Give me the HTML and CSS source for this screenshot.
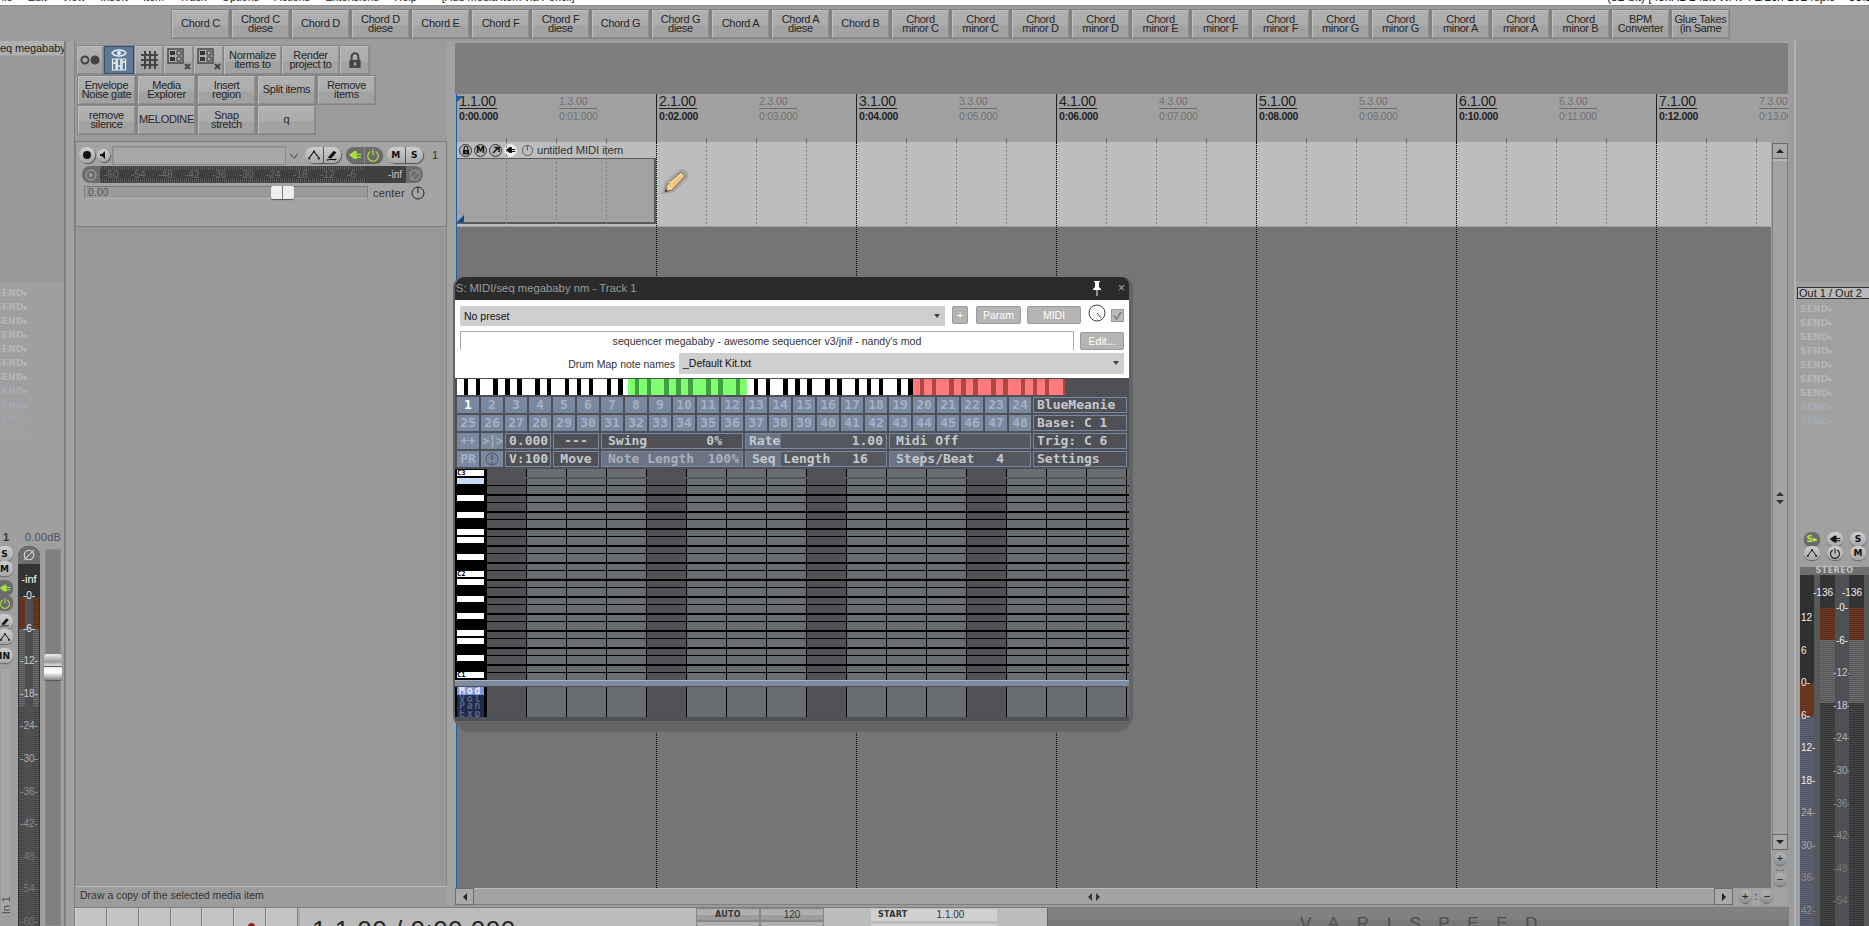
FILE: index.html
```html
<!DOCTYPE html>
<html lang="en">
<head>
<meta charset="utf-8">
<title>REAPER</title>
<link rel="stylesheet" href="styles.css">
</head>
<body>
<svg class="defs" width="0" height="0">
  <symbol id="i-env" viewBox="0 0 16 16"><path d="M2 12 8 4l6 8" fill="none" stroke="#111" stroke-width="1.3"/><circle cx="2.5" cy="12" r="1.2" fill="#111"/><circle cx="8" cy="4" r="1.2" fill="#111"/><circle cx="13.5" cy="12" r="1.2" fill="#111"/></symbol>
  <symbol id="i-fx" viewBox="0 0 16 16"><path d="M3 11 10 3l3 2-6 7z" fill="#111"/><path d="M2 14c3-2 6 0 11-1" fill="none" stroke="#111" stroke-width="1.2"/></symbol>
  <symbol id="i-plug" viewBox="0 0 16 16"><path d="M1 8 7 3.5h3v3h5v1.5h-5v1.5h5V11h-5v1.500H7z" fill="currentColor"/></symbol>
  <symbol id="i-power" viewBox="0 0 16 16"><path d="M5 4a6 6 0 1 0 6 0M8 1.500v7" fill="none" stroke="currentColor" stroke-width="1.4"/></symbol>
  <symbol id="i-phase" viewBox="0 0 16 16"><circle cx="8" cy="8" r="5.500" fill="none" stroke="currentColor" stroke-width="1.200"/><path d="M2 14 14 2" stroke="currentColor" stroke-width="1.200"/></symbol>
  <symbol id="i-lock" viewBox="0 0 16 16"><path d="M5 8V5a3 3 0 0 1 6 0v3" fill="none" stroke="currentColor" stroke-width="1.800"/><path d="M3 8h10v7H3z" fill="currentColor"/><path d="M7 10h2v3H7z" fill="#a5a5a5"/></symbol>
  <symbol id="i-grid-x" viewBox="0 0 24 24"><rect x="1" y="1" width="15" height="14" fill="none" stroke="#333" stroke-width="1.200"/><path d="M3 3h5v4H3zM3 9h5v4H3z" fill="#333"/><path d="M10 3h4v4h-4zM10 9h4v4h-4z" fill="none" stroke="#333"/><path d="m18 16 5 5m0-5-5 5" stroke="#444" stroke-width="2"/></symbol>
</svg>

<div class="menubar">
  <div class="menu-left">
    <span class="m-file">File</span><span>Edit</span><span>View</span><span>Insert</span><span>Item</span><span>Track</span><span>Options</span><span>Actions</span><span>Extensions</span><span>Help</span><span class="m-note">[Add media item via Pencil]</span>
  </div>
  <div class="menu-right">(32-bit) [48kHz 24bit WAV : 2/2ch 1024spls ~ 33.1/33ms]</div>
</div>

<div class="chordbar">
  <div class="chords">
    <button class="tb w57">Chord C</button><button class="tb w57">Chord C<br>diese</button><button class="tb w57">Chord D</button><button class="tb w57">Chord D<br>diese</button><button class="tb w57">Chord E</button><button class="tb w57">Chord F</button><button class="tb w57">Chord F<br>diese</button><button class="tb w57">Chord G</button><button class="tb w57">Chord G<br>diese</button><button class="tb w57">Chord A</button><button class="tb w57">Chord A<br>diese</button><button class="tb w57">Chord B</button>
    <button class="tb w57">Chord<br>minor C</button><button class="tb w57">Chord<br>minor C</button><button class="tb w57">Chord<br>minor D</button><button class="tb w57">Chord<br>minor D</button><button class="tb w57">Chord<br>minor E</button><button class="tb w57">Chord<br>minor F</button><button class="tb w57">Chord<br>minor F</button><button class="tb w57">Chord<br>minor G</button><button class="tb w57">Chord<br>minor G</button><button class="tb w57">Chord<br>minor A</button><button class="tb w57">Chord<br>minor A</button><button class="tb w57">Chord<br>minor B</button>
    <button class="tb w57">BPM<br>Converter</button><button class="tb w57">Glue Takes<br>(in Same</button>
  </div>
</div>

<div class="main">
  <aside class="mixl">
    <div class="mixl-name">eq megababy</div>
    <div class="mixl-top"></div>
    <div class="sends sends-left">
      <div class="send">SEND&#9656;</div><div class="send">SEND&#9656;</div><div class="send">SEND&#9656;</div><div class="send">SEND&#9656;</div><div class="send">SEND&#9656;</div><div class="send">SEND&#9656;</div><div class="send">SEND&#9656;</div><div class="send f1">SEND&#9656;</div><div class="send f2">SEND&#9656;</div><div class="send f3">SEND&#9656;</div><div class="send f4">SEND&#9656;</div>
    </div>
    <div class="mixl-head"><span class="mixl-num">1</span><span class="mixl-db">0.00dB</span></div>
    <div class="strip">
      <div class="strip-btns">
        <div class="sbtn"><span class="pix">S</span></div>
        <div class="sbtn"><span class="pix">M</span></div>
        <div class="sbtn dark gap"><svg class="ic12"><use href="#i-plug"/></svg></div>
        <div class="sbtn dark"><svg class="ic12"><use href="#i-power"/></svg></div>
        <div class="sbtn gap"><svg class="ic12"><use href="#i-fx"/></svg></div>
        <div class="sbtn"><svg class="ic12"><use href="#i-env"/></svg></div>
        <div class="sbtn gap"><span class="pix">IN</span></div>
        <div class="strip-in"><span class="in-label">In 1</span></div>
      </div>
      <div class="lmeter">
        <div class="lmeter-phase"><svg class="ic14"><use href="#i-phase"/></svg></div>
        <div class="lmeter-inf">-inf</div>
        <div class="lmeter-bars">
          <div class="mbar"></div><div class="mmid"></div><div class="mbar"></div>
          <div class="scale scale-left">
            <span class="c0">-0-</span><span class="c0">-6-</span><span class="c1">-12-</span><span class="c1">-18-</span><span class="c2">-24-</span><span class="c2">-30-</span><span class="c3">-36-</span><span class="c3">-42-</span><span class="c4">-48-</span><span class="c4">-54-</span><span class="c4">-60-</span>
          </div>
        </div>
      </div>
      <div class="lfader"><div class="fader-handle"></div></div>
    </div>
  </aside>
  <div class="gutter-l"></div>

  <div class="center">
    <div class="work">
      <section class="tcp">
        <div class="tools">
          <div class="tool-row">
            <button class="tb w26"><svg class="ic24" viewBox="0 0 24 24"><circle cx="7" cy="12" r="3.500" fill="none" stroke="#444" stroke-width="2"/><circle cx="17" cy="12" r="4.500" fill="#444"/></svg></button>
            <button class="tb w30 on"><svg class="ic24" viewBox="0 0 24 24"><path d="M5 5c3-4 11-4 14 0-3 4-11 4-14 0z" fill="none" stroke="#e8eef4" stroke-width="1.300"/><circle cx="12" cy="5" r="2" fill="#e8eef4"/><path d="M5.500 11h3.500v11H5.500zM10.300 11h3.500v11h-3.500zM15.100 11h3.500v11h-3.500z" fill="none" stroke="#e8eef4" stroke-width="1.200"/><path d="M5.500 15h3.500M10.300 18h3.500M15.100 14h3.500" stroke="#e8eef4" stroke-width="1.500"/></svg></button>
            <button class="tb w28"><svg class="ic24" viewBox="0 0 24 24"><path d="M8 3v18M13 3v18M18 3v18M4 7h17M4 12h17M4 17h17" stroke="#444" stroke-width="2"/></svg></button>
            <button class="tb w29"><svg class="ic24"><use href="#i-grid-x"/></svg></button>
            <button class="tb w29"><svg class="ic24"><use href="#i-grid-x"/></svg></button>
            <button class="tb w57">Normalize<br>items to</button>
            <button class="tb w57">Render<br>project to</button>
            <button class="tb w29"><svg class="ic18 lock"><use href="#i-lock"/></svg></button>
          </div>
          <div class="tool-row row-b">
            <button class="tb w57">Envelope<br>Noise gate</button><button class="tb w57">Media<br>Explorer</button><button class="tb w57">Insert<br>region</button><button class="tb w57">Split items</button><button class="tb w57">Remove<br>items</button>
          </div>
          <div class="tool-row row-b">
            <button class="tb w57">remove<br>silence</button><button class="tb w57">MELODINE</button><button class="tb w57">Snap<br>stretch</button><button class="tb w57">q</button>
          </div>
        </div>
        <div class="track">
          <div class="track-top">
            <span class="round arm"><i></i></span>
            <span class="round spk"><svg class="ic10" viewBox="0 0 10 10"><path d="M1 4h2l3-3v8L3 6H1z" fill="#111"/></svg></span>
            <div class="track-name"></div>
            <svg class="chev" viewBox="0 0 12 8"><path d="m2 2 4 4 4-4" fill="none" stroke="#666" stroke-width="1.300"/></svg>
            <span class="pill"><span class="pill-c"><svg class="ic14"><use href="#i-env"/></svg></span><span class="pill-c"><svg class="ic14"><use href="#i-fx"/></svg></span></span>
            <span class="pill pill-dark"><span class="pill-c"><svg class="ic14"><use href="#i-plug"/></svg></span><span class="pill-c"><svg class="ic14"><use href="#i-power"/></svg></span></span>
            <span class="pill"><span class="pill-c pix">M</span><span class="pill-c pix">S</span></span>
            <span class="track-no">1</span>
          </div>
          <div class="tmeter">
            <span class="tm-play"><svg class="ic12" viewBox="0 0 12 12"><circle cx="6" cy="6" r="5" fill="none" stroke="#aaa"/><path d="M4.500 3.500 8 6 4.500 8.500z" fill="#aaa"/></svg></span>
            <div class="tm-scale"><span>-60</span><span>-54</span><span>-48</span><span>-42</span><span>-36</span><span>-30</span><span>-24</span><span>-18</span><span>-12</span><span>-6</span></div>
            <span class="tm-inf">-inf</span>
            <span class="tm-phase"><svg class="ic14"><use href="#i-phase"/></svg></span>
          </div>
          <div class="tvol">
            <div class="vol-slider"><span>0.00</span><div class="vol-handle"></div></div>
            <span class="center-lab">center</span>
            <svg class="pan" viewBox="0 0 14 14"><circle cx="7" cy="7" r="6" fill="none" stroke="#222"/><path d="M7 7V1" stroke="#222"/></svg>
          </div>
        </div>
        <div class="tcp-empty"></div>
        <div class="hint">Draw a copy of the selected media item</div>
      </section>
      <div class="gutter-m"></div>

      <section class="arrange">
        <div class="band"></div>
        <div class="ruler">
          <i class="flag"></i>
          <div class="mk major first"><b class="bar">1.1.00</b><b class="time">0:00.000</b></div>
          <div class="mk"><b class="bar">1.3.00</b><b class="time">0:01.000</b></div>
          <div class="mk major"><b class="bar">2.1.00</b><b class="time">0:02.000</b></div>
          <div class="mk"><b class="bar">2.3.00</b><b class="time">0:03.000</b></div>
          <div class="mk major"><b class="bar">3.1.00</b><b class="time">0:04.000</b></div>
          <div class="mk"><b class="bar">3.3.00</b><b class="time">0:05.000</b></div>
          <div class="mk major"><b class="bar">4.1.00</b><b class="time">0:06.000</b></div>
          <div class="mk"><b class="bar">4.3.00</b><b class="time">0:07.000</b></div>
          <div class="mk major"><b class="bar">5.1.00</b><b class="time">0:08.000</b></div>
          <div class="mk"><b class="bar">5.3.00</b><b class="time">0:09.000</b></div>
          <div class="mk major"><b class="bar">6.1.00</b><b class="time">0:10.000</b></div>
          <div class="mk"><b class="bar">6.3.00</b><b class="time">0:11.000</b></div>
          <div class="mk major"><b class="bar">7.1.00</b><b class="time">0:12.000</b></div>
          <div class="mk"><b class="bar">7.3.00</b><b class="time">0:13.000</b></div>
        </div>
        <div class="area">
          <div class="tracks">
            <div class="lane">
              <div class="item-head">
                <span class="ih"><svg class="ic10" viewBox="0 0 16 16"><use href="#i-lock"/></svg></span>
                <span class="ih pix">M</span>
                <span class="ih"><svg class="ic10" viewBox="0 0 10 10"><path d="M2 8 7 3M3.500 2.500H8V7" fill="none" stroke="#111" stroke-width="1.500"/></svg></span>
                <span class="ih ih-on"><svg class="ic12"><use href="#i-plug"/></svg></span>
                <svg class="ih-pow" viewBox="0 0 14 14"><circle cx="7" cy="7" r="5.500" fill="none" stroke="#555"/><path d="M7 7V2" stroke="#555"/></svg>
                <span class="item-name">untitled MIDI item</span>
              </div>
              <div class="item"><i class="corner"></i></div>
              <svg class="pencil" viewBox="0 0 26 28"><path d="M0 26 3 14 18 1h5l3 4v5L12 24z" fill="#6d6d6d" opacity=".3"/><path d="M3 24l2-7L19 4l4 4L10 22z" fill="#f4c681" stroke="#7a6a50"/><path d="M5.500 17.500l4 4" stroke="#fbf3e2"/><path d="M7 15 20 6" stroke="#fbe2b4"/><path d="M3 24l1-3 2 2z" fill="#333"/></svg>
            </div>
            <div class="lane-grid"></div>
            <div class="bar-grid"><i></i><i></i><i></i><i></i><i></i><i></i><i></i></div>
          </div>
          <div class="vscroll">
            <div class="vs-btn"><svg class="tri" viewBox="0 0 8 4"><path d="M0 4 4 0l4 4z" fill="#222"/></svg></div>
            <div class="vs-track"><svg class="vs-mid" viewBox="0 0 8 14"><path d="M0 5 4 1l4 4zM0 9l4 4 4-4z" fill="#333"/></svg></div>
            <div class="vs-btn"><svg class="tri" viewBox="0 0 8 4"><path d="M0 0l4 4 4-4z" fill="#222"/></svg></div>
            <div class="vs-zoom"><span class="zb">+</span><span class="zdots">...</span><span class="zb">&minus;</span></div>
          </div>
        </div>
        <div class="hscroll">
          <div class="hs-btn"><svg class="tri-v" viewBox="0 0 4 8"><path d="M4 0 0 4l4 4z" fill="#222"/></svg></div>
          <div class="hs-track"><svg class="hs-mid" viewBox="0 0 14 8"><path d="M5 0 1 4l4 4zM9 0l4 4-4 4z" fill="#333"/></svg></div>
          <div class="hs-btn"><svg class="tri-v" viewBox="0 0 4 8"><path d="M0 0l4 4-4 4z" fill="#222"/></svg></div>
          <div class="hs-zoom"><span class="zb">+</span><span class="zcolon">:</span><span class="zb">&minus;</span></div>
        </div>
      </section>
    </div>

    <footer class="transport">
      <div class="tp-main">
        <div class="tp-btns"><span></span><span></span><span></span><span></span><span></span><span class="tp-rec"><i></i></span><span></span></div>
        <div class="tp-time">1.1.00 / 0:00.000</div>
        <div class="tp-tempo"><span class="pix-s">AUTO</span><span class="tempo">120</span><span></span><span></span></div>
        <div class="tp-selgroup">
          <div class="tp-sel"><span class="pix-s">START</span><span class="tempo">1.1.00</span></div>
          <div class="tp-sel"></div>
        </div>
      </div>
      <div class="tp-vari"><span class="vari-top"></span><span class="vari">VARISPEED</span></div>
    </footer>
  </div>

  <aside class="mixr">
    <div class="mixr-top"></div>
    <div class="mixr-out">Out 1 / Out 2</div>
    <div class="sends sends-right">
      <div class="send">SEND&#9656;</div><div class="send">SEND&#9656;</div><div class="send">SEND&#9656;</div><div class="send">SEND&#9656;</div><div class="send">SEND&#9656;</div><div class="send">SEND&#9656;</div><div class="send">SEND&#9656;</div><div class="send f1">SEND&#9656;</div><div class="send f2">SEND&#9656;</div><div class="send f4">SEND&#9656;</div>
    </div>
    <div class="mas-btns">
      <div class="mb-col"><div class="sbtn dark mb"><span class="pix lime">S&#9656;</span></div><div class="sbtn mb"><svg class="ic12"><use href="#i-env"/></svg></div></div>
      <div class="mb-col"><div class="sbtn mb"><svg class="ic12 blk"><use href="#i-plug"/></svg></div><div class="sbtn mb"><svg class="ic12 blk"><use href="#i-power"/></svg></div></div>
      <div class="mb-col"><div class="sbtn mb"><span class="pix">S</span></div><div class="sbtn mb"><span class="pix">M</span></div></div>
    </div>
    <div class="stereo">STEREO</div>
    <div class="rmeter">
      <div class="rm-left">
        <div class="rm-scale"><span>12</span><span>6</span><span>0-</span><span>6-</span><span>12-</span><span>18-</span><span class="c2">24-</span><span class="c2">30-</span><span class="c3">36-</span><span class="c3">42-</span></div>
      </div>
      <div class="rm-sep"></div>
      <div class="rm-bar"><span class="rm-peak">-136</span><div class="rm-fill"></div></div>
      <div class="rm-mid"><div class="scale scale-right"><span class="c0">-0-</span><span class="c0">-6-</span><span class="c1">-12-</span><span class="c1">-18-</span><span class="c2">-24-</span><span class="c2">-30-</span><span class="c3">-36-</span><span class="c3">-42-</span><span class="c4">-48-</span><span class="c4">-54-</span></div></div>
      <div class="rm-bar"><span class="rm-peak">-136</span><div class="rm-fill"></div></div>
      <div class="rm-sep"></div>
    </div>
  </aside>
</div>

<div class="jswin">
  <div class="js-title"><span class="js-name">JS: MIDI/seq megababy nm - Track 1</span>
    <svg class="js-pin" viewBox="0 0 12 16"><path d="M3 1h6v1H8v5l2 2v1H6.500v6h-1v-6H2V9l2-2V2H3z" fill="#fff"/></svg>
    <span class="js-x">&times;</span>
  </div>
  <div class="js-head">
    <div class="js-l1">
      <div class="combo combo-p">No preset<i class="dn"></i></div>
      <button class="wb wb-plus">+</button><button class="wb wb-param">Param</button><button class="wb wb-midi">MIDI</button>
      <svg class="js-knob" viewBox="0 0 18 18"><circle cx="9" cy="9" r="8" fill="#fff" stroke="#444"/><path d="M9 9l4 5" stroke="#444"/></svg>
      <span class="js-check"><svg viewBox="0 0 12 12"><path d="m2 6 3 4 5-8" fill="none" stroke="#777" stroke-width="1.400"/></svg></span>
    </div>
    <div class="js-l2"><div class="js-desc">sequencer megababy - awesome sequencer v3/jnif - nandy's mod</div><button class="wb wb-edit">Edit...</button></div>
    <div class="js-l3"><label class="js-lab">Drum Map note names</label><div class="combo combo-d">_Default Kit.txt<i class="dn"></i></div></div>
  </div>
  <div class="gui">
    <div class="piano"><i class="kk k1"></i><i class="kk k2"></i><i class="kk k3"></i><i class="kk k4"></i></div>
    <div class="gbtns">
      <span class="n sel">1</span><span class="n">2</span><span class="n">3</span><span class="n">4</span><span class="n">5</span><span class="n">6</span><span class="n">7</span><span class="n">8</span><span class="n">9</span><span class="n">10</span><span class="n">11</span><span class="n">12</span><span class="n">13</span><span class="n">14</span><span class="n">15</span><span class="n">16</span><span class="n">17</span><span class="n">18</span><span class="n">19</span><span class="n">20</span><span class="n">21</span><span class="n">22</span><span class="n">23</span><span class="n">24</span><span class="d">BlueMeanie</span>
      <span class="n">25</span><span class="n">26</span><span class="n">27</span><span class="n">28</span><span class="n">29</span><span class="n">30</span><span class="n">31</span><span class="n">32</span><span class="n">33</span><span class="n">34</span><span class="n">35</span><span class="n">36</span><span class="n">37</span><span class="n">38</span><span class="n">39</span><span class="n">40</span><span class="n">41</span><span class="n">42</span><span class="n">43</span><span class="n">44</span><span class="n">45</span><span class="n">46</span><span class="n">47</span><span class="n">48</span><span class="d">Base: C 1</span>
      <span class="n">++</span><span class="n tight">&gt;|&gt;</span><span class="d s2">0.000</span><span class="d s2 ctr">---</span><span class="d s6 sb swing"><em>Swing</em><em>0%</em></span><span class="d s6 sb r1"><em>Rate</em><em>1.00</em></span><span class="d s6 off">Midi Off</span><span class="d">Trig: C 6</span>
      <span class="n">PR</span><span class="n"><svg class="ic14" viewBox="0 0 14 14"><circle cx="7" cy="7" r="6" fill="none" stroke="#4c5260"/><path d="M7 3v5M7 10v1.500" stroke="#4c5260" stroke-width="1.500"/></svg></span><span class="d s2">V:100</span><span class="d s2 ctr">Move</span><span class="d s6 sb nl"><em>Note Length</em><em>100%</em></span><span class="d s6 r1 seqlen"><em>Seq Length</em><em>16</em></span><span class="d s6 r2 seqlen"><em>Steps/Beat</em><em>4</em></span><span class="d">Settings</span>
    </div>
    <div class="seq">
      <div class="seq-keys">
        <b class="lk first">C3</b><i class="wk near blue"></i><i class="wk far"></i><i class="wk far"></i><i class="wk far"></i><i class="wk near"></i><i class="wk far"></i><b class="lk far">C2</b><i class="wk near"></i><i class="wk far"></i><i class="wk far"></i><i class="wk far"></i><i class="wk near"></i><i class="wk far"></i><b class="lk far">C1</b>
      </div>
      <div class="seq-grid"></div>
    </div>
    <div class="seq-split"></div>
    <div class="ccs">
      <div class="cc-labels"><span class="cc on">Mod</span><span class="cc">Vol</span><span class="cc">Pan</span><span class="cc">Exp</span></div>
      <div class="cc-grid"></div>
    </div>
  </div>
</div>
</body>
</html>
```
FILE: styles.css
```css
*{box-sizing:border-box}
html,body{margin:0;height:926px;overflow:hidden}
body{width:1869px;background:#9c9c9c;font-family:"Liberation Sans",Arial,sans-serif;font-size:11px;color:#222;position:relative;display:flex;flex-direction:column}
.defs{position:absolute}
svg{display:block}
.ic10{width:10px;height:10px}.ic12{width:12px;height:12px}.ic14{width:14px;height:14px}.ic18{width:18px;height:18px}.ic24{width:24px;height:24px}

/* menu */
.menubar{height:6px;flex:none;background:#fff;border-bottom:1px solid #888;overflow:hidden;display:flex;justify-content:space-between;font-size:11px;line-height:14px;color:#222}
.menu-left{display:flex;gap:15px;margin-top:-10px;margin-left:-5px}
.menu-left .m-note{margin-left:10px}
.menu-right{margin-top:-10px;white-space:nowrap;width:262px;font-size:12px}

/* toolbar button */
.tb{display:flex;align-items:center;justify-content:center;text-align:center;height:28px;padding:0;border:0;font:11px/9.5px "Liberation Sans",Arial,sans-serif;letter-spacing:-.3px;color:#262626;background:linear-gradient(#b1b1b1 0,#acacac 55%,#a2a2a2 56%,#a2a2a2 100%);box-shadow:inset 1px 1px 0 #bdbdbd,inset -1px -1px 0 #8f8f8f;white-space:nowrap;overflow:hidden}
.w26{width:26px}.w28{width:28px}.w29{width:29px}.w30{width:30px}.w57{width:57px}
.tb.on{background:#5d7a94;box-shadow:inset 0 0 0 1px #3a5268}
.chordbar{height:35px;flex:none;padding:3px 0 0 171px}
.chords{display:inline-flex;gap:3px;padding:1px;background:#828282}
.chords .tb{height:28px}

/* main */
.main{flex:1;display:flex;min-height:0}
.mixl{width:66px;flex:none;border-right:2px solid #7f7f7f;display:flex;flex-direction:column;background:#9a9a9a;overflow:hidden}
.mixl-name{height:15px;background:#b0b0b0;white-space:nowrap;text-align:right;line-height:14px;font-size:11px;padding-right:1px;letter-spacing:-.1px;overflow:hidden;border-bottom:1px solid #a3a3a3}
.mixl-top{height:226px;flex:none;background:#999}
.sends{display:flex;flex-direction:column;background:#9f9f9f}
.sends-left{height:248px;flex:none;padding-top:4px}
.send{height:14px;font:bold 9px/14px "DejaVu Sans",sans-serif;letter-spacing:.2px;color:#b6b6b6;white-space:nowrap}
.sends-left .send{margin-left:-5px}
.f1{color:#a9adb6}.f2{color:#a5a9b3}.f3{color:#a3a5ac}.f4{color:#a1a2a5}
.mixl-head{height:18px;flex:none;background:#9f9f9f;display:flex;align-items:center;font-size:11px;color:#333;padding-left:3px;margin-top:-2px;position:relative}
.mixl-num{width:22px;font-weight:bold}
.mixl-db{color:#4a4f5a;letter-spacing:.2px}
.strip{flex:1;display:flex;background:#9f9f9f;min-height:0}
.strip-btns{width:13px;margin-right:5px;flex:none;display:flex;flex-direction:column}
.sbtn{height:15px;width:17px;margin-left:-4px;flex:none;display:flex;align-items:center;justify-content:center;background:linear-gradient(#cfcfcf,#a8a8a8);border-radius:7px;box-shadow:0 1px 1px #666;color:#111}
.sbtn.dark{background:#6b6b6b;color:#a8e03c}
.sbtn.gap{margin-top:4px}
.pix{font:bold 9px/8px "DejaVu Sans",sans-serif;color:#111}
.strip-in{flex:1;margin-top:5px;margin-bottom:9px;background:#a6a6a6;border:1px solid #999;position:relative;width:12px;overflow:hidden}
.in-label{position:absolute;bottom:2px;left:-1px;writing-mode:vertical-rl;transform:rotate(180deg);font-size:11px;color:#444}
.lmeter{width:22px;flex:none;display:flex;flex-direction:column;background:#333;border-radius:10px 10px 0 0;overflow:hidden}
.lmeter-phase{height:18px;background:#6d6d6d;color:#ddd;display:flex;align-items:center;justify-content:center;flex:none}
.lmeter-inf{height:33px;flex:none;text-align:center;color:#fff;font-size:11px;line-height:30px}
.lmeter-bars{flex:1;display:flex;position:relative;padding:0 1px}
.mbar{width:6px;height:100%;background:repeating-linear-gradient(#0000 0 1px,#0003 1px 2px),linear-gradient(#6f3a22 0 32px,#6a6a6a 32px 110px,#555 110px)}
.mmid{flex:1;background:#4d4f54}
.scale{position:absolute;display:flex;flex-direction:column;align-items:center;font-size:10px;line-height:32.6px}
.scale span{height:32.6px;white-space:nowrap}
.scale-left{left:0;right:0;top:-17px}
.c0{color:#f0f0f0}.c1{color:#c8ccd4}.c2{color:#aaacb0}.c3{color:#8e8e8e}.c4{color:#777}
.lfader{width:16px;margin-left:5px;flex:none;margin-top:3px;background:#808080;border:1px solid #8e8e8e;position:relative}
.fader-handle{position:absolute;left:-2px;width:18px;height:26px;top:104px;border-radius:3px;background:linear-gradient(#eee,#999 30%,#ddd 44%,#555 48%,#eee 52%,#fff 70%,#888);box-shadow:0 1px 1px #555}
.gutter-l{width:9px;flex:none;background:#a2a2a2;border-right:1px solid #7f7f7f}

.center{width:1719px;flex:none;display:flex;flex-direction:column;min-height:0}
.work{height:864px;flex:none;display:flex}
.tcp{width:372px;flex:none;display:flex;flex-direction:column}
.tools{height:100px;flex:none;padding:4px 0 0 1px}
.tool-row{display:inline-flex;background:#858585;padding:1px;gap:1px;float:left;clear:left;margin-bottom:-1px}
.tool-row .tb{height:28px}
.tool-row.row-b{gap:3px;margin-left:1px;margin-top:1px}
.lock{color:#444}
.tb .lock{margin:0}
.track{height:86px;flex:none;background:#a4a4a4;border:1px solid #7c7c7c;border-bottom-width:1px;padding:3px 5px 0 3px}
.track-top{display:flex;align-items:center;height:20px}
.round{width:15px;height:15px;border-radius:50%;background:linear-gradient(#d0d0d0,#a5a5a5);box-shadow:1px 1px 1px #555;display:flex;align-items:center;justify-content:center;flex:none}
.arm{margin-right:2px;width:16px;height:16px}
.arm i{width:8px;height:8px;border-radius:50%;background:#111}
.spk{width:13px;height:13px}
.track-name{width:174px;height:19px;margin:0 0 0 2px;background:#a8a8a8;border:1px solid #8b8b8b;box-shadow:inset 1px 1px 0 #999;flex:none}
.chev{width:12px;height:8px;margin:2px 5px 0 2px;flex:none}
.pill{display:flex;height:16px;width:36px;border-radius:8px;background:linear-gradient(#cecece,#a8a8a8);box-shadow:1px 1px 1px #555;color:#111;margin-right:5px;flex:none}
.pill-c{flex:1;display:flex;align-items:center;justify-content:center}
.pill-c+.pill-c{border-left:1px solid #555}
.pill-dark{background:#6b6b6b;color:#a8e03c}
.pill-dark .pill-c+.pill-c{border-left-color:#888}
.track-no{margin-left:4px;font-size:11px;color:#333}
.tmeter{height:17px;margin:1px 18px 0 3px;display:flex;align-items:center;border-radius:8px;background:#6c6c6c;color:#aaa;overflow:hidden}
.tm-play{width:18px;display:flex;justify-content:center;flex:none}
.tm-scale{flex:1;height:100%;display:flex;padding-left:4px;background:repeating-linear-gradient(90deg,#5c5c5c 0 1px,#383838 1px 2px) top/100% 4px no-repeat,repeating-linear-gradient(90deg,#5c5c5c 0 1px,#383838 1px 2px) bottom/100% 4px no-repeat,#404040;font-size:10px;line-height:17px;color:#6c6c6c}
.tm-scale span{width:27px;flex:none}
.tm-inf{width:40px;flex:none;background:#404040;height:100%;line-height:17px;font-size:10px;color:#ccc;text-align:right;padding-right:4px;margin-left:-10px}
.tm-phase{width:17px;flex:none;display:flex;justify-content:center;color:#999}
.tvol{display:flex;align-items:center;margin:3px 0 0 5px;height:13px}
.vol-slider{width:284px;height:13px;flex:none;background:#9a9a9a;border:1px solid #808080;border-top-color:#7a7a7a;border-bottom-color:#b5b5b5;position:relative;font-size:10px;line-height:11px;padding-left:3px;color:#555;letter-spacing:.3px}
.vol-handle{position:absolute;left:186px;top:-1px;width:23px;height:13px;border-radius:2px;background:linear-gradient(90deg,#eee 0 48%,#777 48% 54%,#eee 54%);box-shadow:0 1px 1px #555}
.center-lab{margin-left:5px;font-size:11px;color:#333;letter-spacing:.2px;width:35px}
.pan{width:14px;height:14px;margin-left:3px}
.tcp-empty{flex:1;background:#989898;border:1px solid #8a8a8a;border-top:0;border-bottom:1px solid #bbb}
.hint{height:18px;flex:none;padding-left:5px;line-height:17px;font-size:10.5px;color:#333}
.gutter-m{width:8px;flex:none;background:#a2a2a2}

.arrange{width:1333px;flex:none;display:flex;flex-direction:column;min-height:0;background:#a2a2a2;margin-left:0}
.band{height:51px;flex:none;margin-top:2px;background:#7e7e7e}
.ruler{height:48px;flex:none;display:flex;overflow:hidden;padding-left:1px;position:relative;background:repeating-linear-gradient(90deg,#6a6a6a 0 1px,#0000 1px 50px) 1px 100%/100% 4px no-repeat,#a0a0a0}
.flag{position:absolute;left:1px;top:2px;border-style:solid;border-width:7px 7px 0 0;border-color:#1d5ea4 transparent transparent transparent}
.mk{width:100px;flex:none;padding:1px 0 0 3px;display:flex;flex-direction:column;color:#717171}
.mk.major{color:#222;border-left:1px solid #222;padding-left:2px}
.mk.first{border-left-color:#1d5ea4}
.mk b{display:block;white-space:nowrap}
.bar{font-size:13px;line-height:13px;font-weight:normal;width:38px;border-bottom:1px solid currentColor}
.mk:not(.major) .bar{font-size:10.5px;letter-spacing:-.1px}
.mk.major .bar{font-size:14px;letter-spacing:-.4px}
.time{font-size:10.5px;line-height:14px;margin-top:0;letter-spacing:-.3px}
.mk:not(.major) .time{font-weight:normal}
.mk.major .time{font-weight:bold}
.area{flex:1;display:flex;min-height:0}
.tracks{width:1315px;flex:none;position:relative;overflow:hidden;background:#757575;border-left:1px solid #1d5ea4;margin-right:1px;margin-left:1px}
.lane{height:85px;background:#bdbdbd;position:relative;border-bottom:1px solid #a0a0a0}
.item-head{height:16px;display:flex;align-items:center;padding-left:2px;gap:0}
.ih{width:13px;height:13px;margin-right:2px;border-radius:50%;border:1px solid #333;display:flex;align-items:center;justify-content:center;background:#b5b5b5;color:#111;flex:none}
.ih-on{background:#eee;border-color:#eee}
.ih-pow{width:13px;height:13px;flex:none;margin-left:2px}
.item-name{margin-left:3px;font-size:11.3px;color:#333;letter-spacing:-.1px}
.item{width:199px;height:66px;background:#a2a2a2;border:1px solid #595959;border-width:1px 2px 2px 0;position:relative}
.corner{position:absolute;left:0;bottom:0;border-style:solid;border-width:0 0 7px 7px;border-color:transparent transparent #0f4a8c transparent}
.pencil{position:absolute;left:205px;top:26px;width:26px;height:28px}
.lane-grid{position:absolute;left:49px;top:0;height:85px;right:0;background:repeating-linear-gradient(90deg,#808080 0 1px,#0000 1px 50px);-webkit-mask-image:repeating-linear-gradient(#000 0 2px,#0000 2px 4px);mask-image:repeating-linear-gradient(#000 0 2px,#0000 2px 4px)}
.bar-grid{position:absolute;left:-1px;right:0;top:0;bottom:0;display:flex}
.bar-grid i{width:200px;flex:none;border-left:1px dotted #000}
.bar-grid i:first-child{border-left:0}
.vscroll{width:16px;flex:none;display:flex;flex-direction:column;background:#a3a3a3;border:1px solid #7d7d7d;border-width:0 1px;margin-top:1px}
.vs-btn{height:16px;flex:none;background:#a9a9a9;border:1px solid #6a6a6a;display:flex;align-items:center;justify-content:center;margin:0 -1px}
.tri{width:8px;height:4px}
.vs-track{flex:1;display:flex;align-items:center;justify-content:center;border-top:2px solid #b8b8b8}
.vs-mid{width:8px;height:14px}
.vs-zoom{height:38px;flex:none;display:flex;flex-direction:column;align-items:center;background:#9e9e9e;margin:0 -1px}
.zb{width:13px;height:13px;flex:none;border-radius:50%;background:linear-gradient(#b5b5b5,#8e8e8e);font-size:11px;line-height:12px;text-align:center;color:#222;box-shadow:0 1px 1px #666;margin-top:2px}
.zdots{line-height:6px;font-size:10px;height:6px;color:#444}
.hscroll{height:17px;flex:none;display:flex;background:#a2a2a2}
.hs-btn{width:19px;flex:none;background:#a9a9a9;border:1px solid #6d6d6d;display:flex;align-items:center;justify-content:center}
.tri-v{width:4px;height:8px}
.hs-track{width:1240px;flex:none;display:flex;align-items:center;justify-content:center;border-top:1px solid #b8b8b8;border-bottom:1px solid #7e7e7e}
.hs-mid{width:14px;height:8px}
.hs-zoom{width:40px;display:flex;align-items:center;justify-content:center;gap:3px;margin-left:3px}
.hs-zoom .zb{margin-top:0}
.zcolon{font-size:10px}

/* transport */
.transport{height:19px;flex:none;margin-top:2px;display:flex;overflow:hidden;width:1714px;border-top:1px solid #7d7d7d}
.tp-main{width:972px;flex:none;background:#bcbcbc;display:flex;position:relative}
.tp-btns{display:flex;width:223px;flex:none}
.tp-btns span{width:32px;border-right:1px solid #7f7f7f;border-left:1px solid #d0d0d0;position:relative;background:#c4c4c4}
.tp-rec i{position:absolute;left:13px;top:15px;width:7px;height:7px;border-radius:50%;background:#a11c1c}
.tp-time{width:398px;flex:none;padding:8px 0 0 12px;font-size:26px;line-height:28px;letter-spacing:.5px;color:#222;white-space:nowrap;overflow:hidden;border-left:2px solid #aaa}
.tp-tempo{display:flex;flex-wrap:wrap;height:100%;flex:none;width:128px;align-content:flex-start}
.tp-tempo>span{width:64px;height:13px;background:linear-gradient(#b0b0b0 50%,#9c9c9c 50%);border:1px solid #888;text-align:center;line-height:11px}
.pix-s{font:bold 8px/11px "DejaVu Sans",sans-serif;color:#333;letter-spacing:.3px}
.tempo{font-size:10px;color:#333;line-height:11px}
.tp-selgroup{margin-left:47px;margin-top:1px;width:126px;flex:none;display:flex;flex-direction:column;gap:3px}
.tp-sel{height:12px;background:#d0d0d0;display:flex;gap:29px;padding-left:7px;flex:none;line-height:11px}
.tp-vari{flex:1;background:#787878;position:relative;overflow:hidden;border-left:1px solid #666}
.vari-top{display:block;height:12px;background:#818181}
.vari{position:absolute;left:252px;top:6px;font-size:17px;line-height:20px;letter-spacing:17.700px;color:#4d4d4d;white-space:nowrap}

/* right mixer */
.mixr{flex:1;min-width:0;display:flex;flex-direction:column;border-left:2px solid #b2b2b2;overflow:hidden;background:#a0a0a0}
.mixr-top{height:241px;flex:none;background:#999}
.mixr-out{height:12px;flex:none;margin:5px 0 0 1px;width:80px;background:#bababa;border:1px solid #333;line-height:10px;font-size:11px;padding-left:1px;white-space:nowrap;color:#222}
.sends-right{height:233px;flex:none;padding:3px 0 0 4px;background:#a0a0a0}
.mas-btns{height:35px;flex:none;display:flex;gap:8px;padding-left:9px}
.mb-col{display:flex;flex-direction:column;width:15px}
.sbtn.mb{margin-left:-1px;height:14px;width:16px}
.lime{color:#b6ec3a}
.blk{color:#111}
.stereo{height:8px;margin-left:4px;flex:none;background:#6f6f6f;color:#c3c3c3;font:bold 8px/8px "DejaVu Sans",sans-serif;letter-spacing:.5px;text-align:center}
.rmeter{flex:1;display:flex;margin-left:4px;background:#333;min-height:0}
.rm-left{width:14px;flex:none;position:relative;background:linear-gradient(#333 0 108px,#6f3a22 108px 142px,#5e6272 142px);overflow:visible}
.rm-left::after{content:"";position:absolute;inset:0;background:repeating-linear-gradient(#0000 0 1px,#0002 1px 2px)}
.rm-scale{position:absolute;z-index:1;left:1px;top:27px;display:flex;flex-direction:column;font-size:10px;color:#eee}
.rm-scale span{height:32.5px;line-height:32px;white-space:nowrap}
.rm-sep{width:6px;flex:none;background:#56585c}
.rm-bar{width:15px;flex:none;position:relative;background:#333}
.rm-peak{position:absolute;left:-7px;top:12px;color:#eee;font-size:10px;z-index:2;line-height:12px;white-space:nowrap}
.rm-fill{position:absolute;left:0;right:0;top:33px;bottom:0;background:repeating-linear-gradient(#0000 0 1px,#0003 1px 2px),linear-gradient(#6f3a22 0 32px,#6c6c6c 32px 95px,#444 95px)}
.rm-mid{width:14px;flex:none;position:relative;background:#4e5055}
.scale-right{left:-4px;right:-4px;top:17px}

/* JS window */
.jswin{position:absolute;left:453px;top:277px;width:680px;height:455px;padding:0 4px 11px 2px;background:#646464;border-radius:10px 10px 18px 18px}
.js-title{height:23px;background:#2b2b2b;border-radius:10px 8px 0 0;position:relative;color:#9c9c9c;font-size:11.3px;line-height:23px;display:flex;align-items:center;overflow:hidden}
.js-name{margin-left:-5px;white-space:nowrap}
.js-pin{position:absolute;left:636px;top:3px;width:12px;height:16px}
.js-x{position:absolute;left:663px;top:0;color:#aaa;font-size:12px}
.js-head{height:78px;background:#fff;padding:6px 5px 0 5px;color:#333}
.js-l1{display:flex;align-items:flex-start;height:25px}
.combo{height:20px;background:#cfcfcf;font-size:10.5px;line-height:20px;padding-left:4px;color:#111;position:relative;white-space:nowrap}
.combo-p{width:493px}
.dn{position:absolute;right:5px;top:8px;border-style:solid;border-width:4px 3px 0;border-color:#444 transparent transparent}
.wb{height:18px;padding:0;border:1px solid #9a9a9a;border-radius:2px;background:#b4b4b4;color:#fff;font:10.5px "Liberation Sans",sans-serif;flex:none}
.wb-plus{width:16px;margin-left:7px}.wb-param{width:45px;margin-left:8px}.wb-midi{width:54px;margin-left:6px}
.js-knob{width:18px;height:18px;margin:-2px 0 0 7px;flex:none}
.js-check{width:13px;height:13px;margin:3px 0 0 5px;background:#bbb;border:1px solid #999;flex:none;display:block}
.js-l2{display:flex;height:22px;margin-top:0}
.js-desc{width:614px;height:19px;border:1px solid #aaa;border-width:1px 1px 0 1px;text-align:center;line-height:19px;font-size:10.6px;color:#333;white-space:nowrap;padding-right:0}
.wb-edit{width:44px;height:18px;margin:1px 0 0 6px}
.js-l3{display:flex;align-items:center;justify-content:flex-end;margin-top:0;height:21px;padding-right:0}
.js-lab{font-size:10.5px;color:#333;margin-right:4px}
.combo-d{width:445px;height:21px}
.gui{height:343px;background:#4e5056;padding-top:1px}
.piano{height:16px;margin-left:2px;display:flex}
.kk{display:block;height:16px;flex:none;background:repeating-linear-gradient(90deg,var(--w) 0 6.7px,var(--k) 6.7px 11.2px,var(--w) 11.2px 18.6px,var(--k) 18.6px 23.1px,var(--w) 23.1px 36.4px,var(--k) 36.4px 40.9px,var(--w) 40.9px 48.3px,var(--k) 48.3px 52.8px,var(--w) 52.8px 60.2px,var(--k) 60.2px 64.7px,var(--w) 64.7px 71.4px)}
.k1{width:171px;--w:#fff;--k:#000}
.k2{width:119px;--w:#80ff70;--k:#40a040}
.k3{width:166px;--w:#fff;--k:#000}
.k4{width:152px;--w:#ff7a7a;--k:#b04646}
.gbtns{display:grid;grid-template-columns:repeat(24,22px) 94px;grid-auto-rows:16px;gap:2px;margin:2px 0 0 2px;font:bold 13px/16px "DejaVu Sans Mono","Liberation Mono",monospace}
.gbtns span{display:flex;align-items:center;white-space:nowrap;overflow:hidden}
.n{justify-content:center;background:#7a88a0;color:#a6b0c0}
.n.tight{letter-spacing:-1px}
.n.sel{color:#fff}
.d{background:#4e5056;border:1px solid #7a88a0;color:#c6c8cc;padding:0 3px}
.s2{grid-column:span 2}.s6{grid-column:span 6}
.ctr{justify-content:center}
.sb{justify-content:space-between}
.swing{padding:0 20px 0 6px}
.off{background:#55575e;padding-left:6px}
.d em{font-style:normal}
.seqlen{justify-content:flex-start;padding-left:6px}
.seqlen em+em{margin-left:22px}
.r1{background:linear-gradient(90deg,#6a7484 35px,#55575e 35px)}
.r2{background:linear-gradient(90deg,#6a7484 34px,#55575e 34px)}
.nl{background:#6a7484;color:#aab0bb;padding-left:6px}
.seq{display:flex;height:211px;margin-top:2px;overflow:hidden}
.seq-keys{width:32px;height:211px;flex:none;background:#000;padding:1px 2px;display:flex;flex-direction:column}
.wk,.lk{display:block;width:27px;height:6px;flex:none;background:#fff}
.lk{color:#000;font:bold 7px/6px "DejaVu Sans Mono",monospace;overflow:hidden}
.near{margin-top:2px}
.far{margin-top:11px}
.blue{background:#c8dcf8}
.seq-grid{flex:1;background:linear-gradient(#555,#555) 0 8px/100% 2px no-repeat,linear-gradient(#555,#555) 0 109px/100% 1px no-repeat,repeating-linear-gradient(#0000 0 8px,#000 8px 10px,#0000 10px 16px,#000 16px 17px),repeating-linear-gradient(90deg,#0000 0 39px,#000 39px 40px),linear-gradient(90deg,#505256 40px,#0000 40px),linear-gradient(90deg,#0000 160px,#505256 160px 200px,#0000 200px),linear-gradient(90deg,#0000 320px,#505256 320px 360px,#0000 360px),linear-gradient(90deg,#0000 480px,#505256 480px 520px,#0000 520px),#696c71}
.seq-split{height:6px;background:linear-gradient(#a6b4c8 0 1px,#7d8aa0 1px);margin-bottom:1px}
.ccs{display:flex;height:30px}
.cc-labels{width:32px;flex:none;background:#000;display:flex;flex-direction:column;padding-left:2px;overflow:hidden}
.cc{height:7.500px;flex:none;background:#1e2a50;color:#5a6478;font:bold 10px/7.500px "DejaVu Sans Mono",monospace;letter-spacing:1.700px;text-align:center;width:27px;overflow:hidden}
.cc.on{background:#7a96dc;color:#eef}
.cc-grid{flex:1;background:repeating-linear-gradient(90deg,#0000 0 39px,#000 39px 40px),linear-gradient(90deg,#505256 40px,#0000 40px),linear-gradient(90deg,#0000 160px,#505256 160px 200px,#0000 200px),linear-gradient(90deg,#0000 320px,#505256 320px 360px,#0000 360px),linear-gradient(90deg,#0000 480px,#505256 480px 520px,#0000 520px),#696c71}
```
